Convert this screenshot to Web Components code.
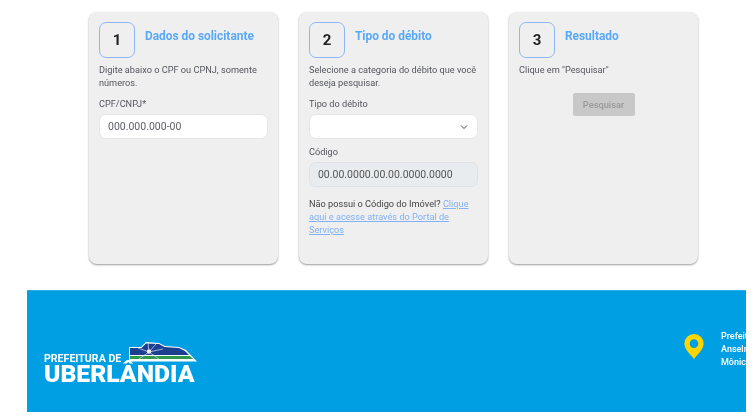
<!DOCTYPE html>
<html lang="pt-BR"><head><meta charset="utf-8"><title>Consulta</title>
<style>
html,body{margin:0;padding:0;background:#fff;height:417px;overflow:hidden;font-family:Roboto,"Liberation Sans",sans-serif}
</style></head><body>
<app-page>
  <step-row>
    <step-card num="1" heading="Dados do solicitante">
      <p-note>Digite abaixo o CPF ou CPNJ, somente números.</p-note>
      <field-box label="CPF/CNPJ*" value="000.000.000-00"></field-box>
    </step-card>
    <step-card num="2" heading="Tipo do débito">
      <p-note>Selecione a categoria do débito que você deseja pesquisar.</p-note>
      <field-box label="Tipo do débito" kind="select"></field-box>
      <field-box label="Código" value="00.00.0000.00.00.0000.0000" kind="disabled"></field-box>
      <p-note dark>Não possui o Código do Imóvel? <a href="#" style="color:#82b1f4">Clique aqui e acesse através do Portal de Serviços</a></p-note>
    </step-card>
    <step-card num="3" heading="Resultado">
      <p-note>Clique em "Pesquisar"</p-note>
      <search-btn>Pesquisar</search-btn>
    </step-card>
  </step-row>
  <site-footer></site-footer>
</app-page>
<script>
function def(name,css,html){
  customElements.define(name,class extends HTMLElement{
    constructor(){super();this.attachShadow({mode:'open'}).innerHTML='<style>'+css+'</style>'+(typeof html==='function'?'':html);}
    connectedCallback(){if(typeof html==='function'){const t=document.createElement('template');t.innerHTML=html(this);this.shadowRoot.append(t.content);}}
  });
}
def('app-page',':host{display:block;width:754px;filter:blur(.3px)}','<slot></slot>');
def('step-row',':host{display:flex;gap:20.4px;padding:12px 0 0 88.8px;box-sizing:border-box;height:290px;align-items:flex-start}','<slot></slot>');
def('step-card',`:host{display:block;box-sizing:border-box;width:189.6px;height:252px;padding:10px 10.2px 0;background:#efefef;border-radius:8px;box-shadow:0 1px 2px rgba(0,0,0,.4)}
.head{display:flex;gap:10px;align-items:flex-start;margin-bottom:5px}
.num{box-sizing:border-box;width:36px;height:36px;border:1px solid #8db8f5;border-radius:7px;display:flex;align-items:center;justify-content:center;font:700 15px Roboto,sans-serif;color:#222}
h2{margin:7px 0 0;font:700 11.9px/15px Roboto,sans-serif;color:#5aa9f8}`,
 el=>`<div class="head"><div class="num">${el.getAttribute('num')}</div><h2>${el.getAttribute('heading')}</h2></div><slot></slot>`);
def('p-note',`:host{display:block;font:400 9.2px/13px Roboto,sans-serif;color:#55565e;margin-bottom:8px}:host([dark]){color:#444;margin-top:10px}`,'<slot></slot>');
def('field-box',`:host{display:block;margin-bottom:6px}
label{display:block;font:400 9.2px/13px Roboto,sans-serif;color:#55565e;margin-bottom:4px}
.box{box-sizing:border-box;width:169px;height:25px;border-radius:7px;background:#fff;border:1px solid #e6e6e6;display:flex;align-items:center;justify-content:space-between;padding:0 8px;font:400 10.5px Roboto,sans-serif;color:#5f6066}
.dis{background:#e9ecef;border-color:#dee2e6;color:#555}
svg{display:block}`,
 el=>{const k=el.getAttribute('kind');return `<label>${el.getAttribute('label')}</label><div class="box ${k==='disabled'?'dis':''}"><span>${el.getAttribute('value')||''}</span>${k==='select'?'<svg width="10" height="10" viewBox="0 0 10 10"><path d="M2 3.500 5 6.500l3-3" fill="none" stroke="#444" stroke-width="1"/></svg>':''}</div>`});
def('search-btn',`:host{display:flex;justify-content:center;margin-top:17px}
.b{width:62px;height:23px;border-radius:2px;background:#c8c8c8;color:#9a9a9a;display:flex;align-items:center;justify-content:center;font:500 9.3px Roboto,sans-serif}`,'<div class="b"><slot></slot></div>');
def('site-footer',`:host{display:block;box-sizing:border-box;margin-left:27px;width:719px;height:122px;background:#009fe3;border-top:1px solid #29aee8;overflow:hidden}
.in{display:flex;align-items:center;justify-content:space-between;height:100%;padding:0 0 0 17px}
.logo{position:relative;width:153px;height:40px;margin-top:30px;color:#fff}
.logo svg{position:absolute;left:85px;top:-5px}
.p{position:absolute;left:0;top:6px;font:700 10.6px/12px Roboto,sans-serif;white-space:nowrap}
.u{position:absolute;left:0;top:15px;font:900 24.7px/24px Roboto,sans-serif;white-space:nowrap}
.addr{display:flex;align-items:center;gap:17px;width:62px;flex:none;margin-top:-4px}
.pin{flex:none;margin-top:-6px}
.t{font:500 9px/13px Roboto,sans-serif;color:#fff;white-space:nowrap;width:26px;flex:none;overflow:hidden}`,
`<div class="in"><div class="logo"><svg width="68" height="20" viewBox="0 0 68 20"><path d="M0 5 12 5 17 0 30 1 36 4 50 5 57 8 68 19.500 0 19.500Z" fill="#fff"/><path d="M1 6 12.500 6 17 1.500 30 2 35.500 5 50 6 56 9 60 13 1 13Z" fill="#1d3f8f"/><path d="M1 14 61 14 64 17 1 17Z" fill="#2f9a4c"/><path d="M20 10 10 17M20 10 30 17M20 10 9 6M20 10 19 1M20 10 27 2M20 10 34 7" stroke="#cfe3f5" stroke-width=".7"/><circle cx="20" cy="9.500" r="2.200" fill="#f7e8ea"/></svg><div class="p">PREFEITURA DE</div><div class="u">UBERLÂNDIA</div></div>
<div class="addr"><svg class="pin" width="20" height="25" viewBox="0 0 20 26"><path fill="#ffd500" fill-rule="evenodd" d="M10 0a10 10 0 0 1 10 10c0 6-6 11-10 16C6 21 0 16 0 10A10 10 0 0 1 10 0Zm0 5.500a4.500 4.500 0 1 0 0 9 4.500 4.500 0 0 0 0-9Z"/></svg><div class="t">Prefeitura<br>Anselmo<br>Mônica</div></div></div>`);
</script>
</body></html>
